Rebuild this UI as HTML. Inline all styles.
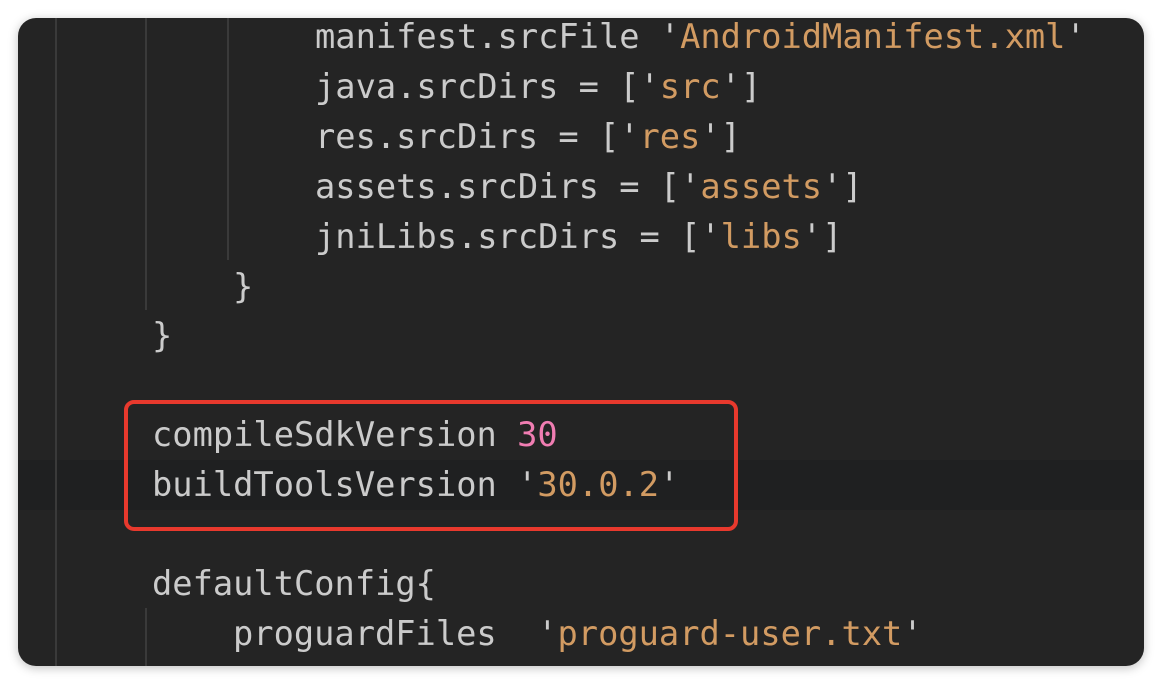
<!DOCTYPE html><html><head><style>
body{margin:0;width:1162px;height:685px;background:#fff;overflow:hidden;position:relative}
#p{position:absolute;left:18px;top:18px;width:1126px;height:648px;background:#242424;border-radius:18px;overflow:hidden;box-shadow:0 2px 10px rgba(0,0,0,.25)}
.g{position:absolute;width:2px;background:#3a3a3a}
.hl{position:absolute;left:0;right:0;top:442px;height:50px;background:#1f2021}
.l{position:absolute;font-family:"DejaVu Sans Mono","Liberation Mono",monospace;font-size:33.7px;color:#cbcbcb;white-space:pre;line-height:50px}
.s{color:#d29b62}.n{color:#f07db2}
#box{position:absolute;left:106px;top:382px;width:606px;height:123px;border:4px solid #e8392d;border-radius:10px}
</style></head><body><div id="p">
<div class="hl"></div>
<div class="g" style="left:37px;top:0;height:648px"></div>
<div class="g" style="left:127px;top:0;height:292px"></div>
<div class="g" style="left:209px;top:0;height:242px"></div>
<div class="g" style="left:127px;top:590px;height:60px"></div>
<div class="l" style="left:297px;top:-6px">manifest.srcFile '<span class="s">AndroidManifest.xml</span>'</div>
<div class="l" style="left:297px;top:44px">java.srcDirs = ['<span class="s">src</span>']</div>
<div class="l" style="left:297px;top:94px">res.srcDirs = ['<span class="s">res</span>']</div>
<div class="l" style="left:297px;top:144px">assets.srcDirs = ['<span class="s">assets</span>']</div>
<div class="l" style="left:297px;top:194px">jniLibs.srcDirs = ['<span class="s">libs</span>']</div>
<div class="l" style="left:215px;top:244px">}</div>
<div class="l" style="left:134px;top:293px">}</div>
<div class="l" style="left:134px;top:392px">compileSdkVersion <span class="n">30</span></div>
<div class="l" style="left:134px;top:442px">buildToolsVersion '<span class="s">30.0.2</span>'</div>
<div class="l" style="left:134px;top:541px">defaultConfig{</div>
<div class="l" style="left:215px;top:591px">proguardFiles  '<span class="s">proguard-user.txt</span>'</div>
<div id="box"></div>
</div></body></html>
